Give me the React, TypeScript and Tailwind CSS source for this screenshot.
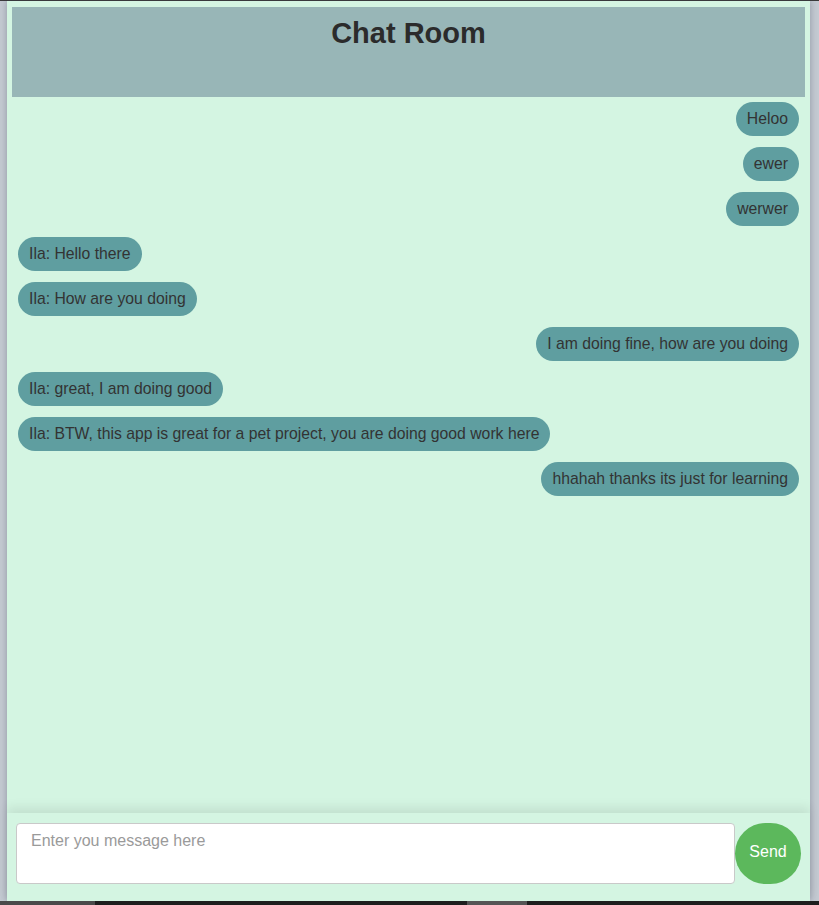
import React from "react";

type Message = { id: number; text: string; mine: boolean };

const messages: Message[] = [
  { id: 1, text: "Heloo", mine: true },
  { id: 2, text: "ewer", mine: true },
  { id: 3, text: "werwer", mine: true },
  { id: 4, text: "Ila: Hello there", mine: false },
  { id: 5, text: "Ila: How are you doing", mine: false },
  { id: 6, text: "I am doing fine, how are you doing", mine: true },
  { id: 7, text: "Ila: great, I am doing good", mine: false },
  {
    id: 8,
    text: "Ila: BTW, this app is great for a pet project, you are doing good work here",
    mine: false,
  },
  { id: 9, text: "hhahah thanks its just for learning", mine: true },
];

export default function App() {
  return (
    <div className="h-[905px] w-full flex flex-col bg-[#c4cad2] font-['Liberation_Sans',Arial,sans-serif] overflow-hidden">
      <div className="h-px bg-[#3b3b3b]" />
      <div className="flex-1 flex flex-col ml-[7px] w-[803px] bg-[#d4f5e2] shadow-[0_0_7px_rgba(40,50,70,0.35)] min-h-0">
        <div className="flex flex-col flex-1 px-[5px] pt-[6px]">
          <header className="h-[90px] bg-[#98b6b7] flex justify-center">
            <h1 className="mt-[8px] text-[29px] font-bold text-[#2b2b2b] leading-tight">
              Chat Room
            </h1>
          </header>
          <div className="flex flex-col gap-[11px] pt-[5px] px-[6px]">
            {messages.map((m) => (
              <div
                key={m.id}
                className={m.mine ? "flex justify-end" : "flex justify-start"}
              >
                <span className="bg-[#5f9ea0] text-[#333] text-[15.75px] leading-[18px] px-[11px] py-[8px] rounded-full">
                  {m.text}
                </span>
              </div>
            ))}
          </div>
        </div>
        <footer className="h-[88px] flex items-start px-[9px] pt-[10px] bg-[#d4f5e2] shadow-[0_-6px_10px_rgba(0,0,0,0.08)]">
          <textarea
            placeholder="Enter you message here"
            className="w-[719px] h-[61px] bg-white border border-[#c9c9c9] rounded-[4px] px-[14px] py-[5px] text-base text-[#333] placeholder:text-[#9a9a9a] resize-none outline-none"
          />
          <button className="w-[66px] h-[61px] rounded-[32px] bg-[#5cb85c] text-white text-base pb-[3px]">
            Send
          </button>
        </footer>
      </div>
      <div className="h-[4px] flex">
        <div className="w-[95px] bg-[#4a4a4a]" />
        <div className="w-[372px] bg-[#1e1e1e]" />
        <div className="w-[60px] bg-[#555]" />
        <div className="flex-1 bg-[#1e1e1e]" />
      </div>
    </div>
  );
}
